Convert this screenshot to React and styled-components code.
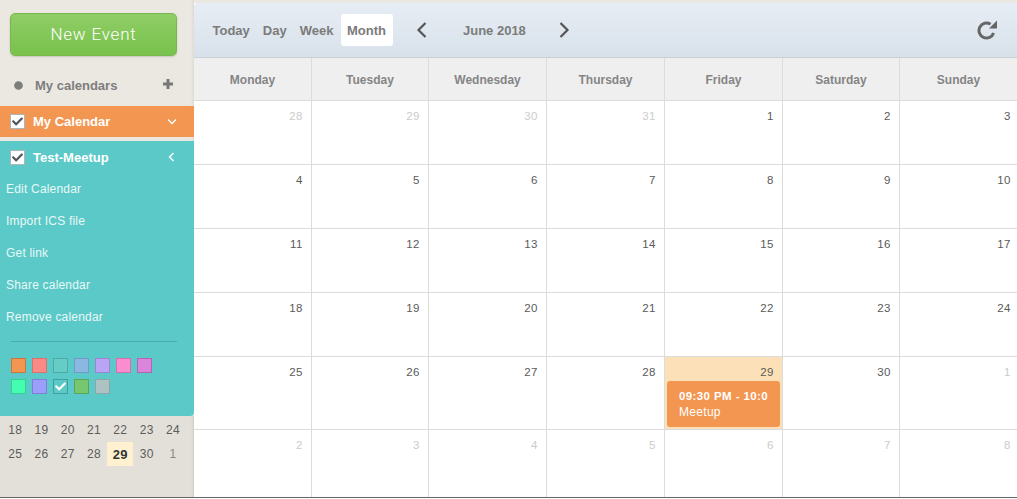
import React from 'react';
import styled, { createGlobalStyle } from 'styled-components';
import { FaCheck, FaCircle } from 'react-icons/fa';

const GlobalStyle = createGlobalStyle`
html, body { margin:0; padding:0; background:#fff; overflow:hidden; }
body { font-family:"Liberation Sans", Arial, sans-serif; }
* { box-sizing:border-box; }
`

const Page = styled.div`
width:1017px;
height:498px;
display:flex;
overflow:hidden;
border-bottom:1px solid #666;
`

const Sidebar = styled.aside`
width:194px;
flex:none;
display:flex;
flex-direction:column;
background:#ebe8e1;
box-shadow:inset -3px 0 3px -2px rgba(0,0,0,0.08);
`

const NewEvent = styled.button`
display:block;
width:167px;
height:43px;
margin:13px 0 0 10px;
padding:0 0 2px;
border:1px solid #78b84e;
border-radius:5px;
background:linear-gradient(#90cd66,#78c24c);
box-shadow:0 1px 2px rgba(0,0,0,0.15);
color:#fff;
font-family:Roboto, sans-serif;
font-weight:300;
font-size:17px;
letter-spacing:0.8px;
text-align:center;
`

const CalendarsHead = styled.div`
height:50px;
display:flex;
align-items:center;
padding:8px 21px 0 14px;
color:#7d7d7d;
font-size:13px;
font-weight:bold;
svg { flex:none; }
span { flex:1; margin-left:12px; }
`

const PlusIcon = styled.svg`
width:10px;
height:10px;
margin-bottom:2px;
fill:#777;
`

const CalendarRow = styled.div`
height:${p => p.$h}px;
display:flex;
align-items:center;
padding:0 ${p => p.$right}px 0 10px;
background:${p => p.$bg};
color:#fff;
font-size:13px;
font-weight:bold;
span { flex:1; margin-left:8px; }
`

const CheckBox = styled.div`
width:15px;
height:15px;
flex:none;
display:flex;
align-items:center;
justify-content:center;
background:#fff;
border:1px solid #aeb6bb;
color:#4f5660;
font-size:11px;
`

const TealPanel = styled.div`
margin-top:4px;
background:#5bc9c7;
border-bottom-right-radius:4px;
height:275px;
display:flex;
flex-direction:column;
`

const MenuList = styled.div`
display:flex;
flex-direction:column;
`

const MenuItem = styled.div`
height:32px;
line-height:32px;
padding-left:6px;
color:#e9f8f8;
font-size:12px;
letter-spacing:0.2px;
`

const Divider = styled.div`
height:1px;
margin:8px 17px 0 11px;
background:#48acab;
`

const Swatches = styled.div`
display:grid;
grid-template-columns:repeat(7,15px);
grid-auto-rows:15px;
column-gap:6px;
row-gap:6px;
margin:16px 0 0 11px;
`

const Swatch = styled.div`
display:flex;
align-items:center;
justify-content:center;
background:${p => p.$bg};
border:1px solid ${p => p.$line};
color:#fff;
font-size:11px;
`

const MiniCal = styled.div`
flex:1;
background:#e3e0da;
display:grid;
grid-template-columns:repeat(7,26.3px);
grid-auto-rows:24px;
align-content:start;
padding:2px 0 0 2px;
box-shadow:inset -3px 0 3px -2px rgba(0,0,0,0.1);
`

const MiniDay = styled.div`
display:flex;
align-items:center;
justify-content:center;
font-size:12px;
letter-spacing:0.3px;
color:${p => p.$muted ? '#8b8b87' : '#5c5c5a'};
${p => p.$today && 'background:#fff1cf;color:#333;font-weight:bold;font-size:13px;'}
`

const Main = styled.main`
flex:1;
min-width:0;
display:flex;
flex-direction:column;
padding-top:3px;
background:linear-gradient(#ebe8e1 3px,#fff 3px);
`

const Toolbar = styled.header`
height:55px;
flex:none;
display:flex;
align-items:center;
padding:0 20px 0 12px;
background:linear-gradient(#e7edf5,#d8e1ea);
border-bottom:1px solid #c9d0d6;
border-top-left-radius:4px;
color:#7b7b7b;
font-size:13px;
font-weight:bold;
`

const ViewTab = styled.div`
height:32px;
padding:${p => p.$active ? '0 7px 0 6px' : '0 6.5px'};
margin-left:${p => p.$active ? '1px' : '0'};
display:flex;
align-items:center;
border-radius:3px;
background:${p => p.$active ? '#fff' : 'transparent'};
`

const Month = styled.div`
width:130px;
padding-left:3px;
text-align:center;
font-size:13px;
`

const NavArrow = styled.svg`
width:12px;
height:16px;
flex:none;
fill:none;
stroke:#555;
stroke-width:2.2;
margin:${p => p.$margin || 0};
`

const Refresh = styled.svg`
width:20px;
height:20px;
margin-left:auto;
fill:none;
stroke:#666;
stroke-width:3;
polygon { fill:#666; stroke:none; }
`

const columns = '118px 117px 118px 118px 118px 117px 117px';

const WeekHead = styled.div`
height:43px;
flex:none;
display:grid;
grid-template-columns:${columns};
background:#efefef;
border-bottom:1px solid #dcdcdc;
`

const WeekCell = styled.div`
display:flex;
align-items:center;
justify-content:center;
padding-top:2px;
color:#858585;
font-size:12px;
font-weight:bold;
border-right:1px solid #dcdcdc;
&:last-child { border-right:none; }
`

const Grid = styled.div`
flex:1;
display:grid;
grid-template-columns:${columns};
grid-template-rows:64px 64px 64px 64px 73px 1fr;
`

const DayCell = styled.div`
border-right:1px solid #dcdcdc;
border-bottom:1px solid #dcdcdc;
background:${p => p.$hl ? '#fce1b8' : '#fff'};
padding:9px 8px 0 2px;
text-align:right;
font-size:11.5px;
letter-spacing:0.5px;
color:${p => p.$muted ? '#cbcbcb' : '#5a5a5a'};
&:nth-child(7n) { border-right:none; padding-right:6px; }
&:nth-last-child(-n+7) { border-bottom:none; }
`

const EventCard = styled.div`
margin:3px -6px 0 0;
height:46px;
padding:7px 0 0 12px;
background:#f39651;
border-radius:3px;
color:#fff;
text-align:left;
font-size:12px;
line-height:16px;
overflow:hidden;
white-space:nowrap;
letter-spacing:0.3px;
b { display:block; width:89px; overflow:hidden; letter-spacing:0.4px; font-size:11.5px; }
`

const swatches = [
  ['#f39651', '#c9773c'], ['#fb8a84', '#d9726d'], ['#66cdc6', '#4fa8a3'], ['#8bb8e0', '#6f9cc0'],
  ['#baa4f4', '#9a85d0'], ['#f98dd0', '#d470ad'], ['#d985d9', '#b365b3'], ['#44fdb0', '#35d090'],
  ['#9c9efc', '#7e80d8'], ['#5bc9c7', '#3f9f9d', true], ['#76c770', '#5aa655'], ['#abc3c3', '#8ea5a5'],
];

const weekDays = ['Monday', 'Tuesday', 'Wednesday', 'Thursday', 'Friday', 'Saturday', 'Sunday'];

const cells = [
  [28, 1], [29, 1], [30, 1], [31, 1], [1], [2], [3],
  [4], [5], [6], [7], [8], [9], [10],
  [11], [12], [13], [14], [15], [16], [17],
  [18], [19], [20], [21], [22], [23], [24],
  [25], [26], [27], [28], [29], [30], [1, 1],
  [2, 1], [3, 1], [4, 1], [5, 1], [6, 1], [7, 1], [8, 1],
];

const miniDays = [18, 19, 20, 21, 22, 23, 24, 25, 26, 27, 28, 29, 30, 1];

export default function App() {
  return (
    <Page>
      <GlobalStyle />
      <Sidebar>
        <NewEvent>New Event</NewEvent>
        <CalendarsHead>
          <FaCircle size={9} />
          <span>My calendars</span>
          <PlusIcon viewBox="0 0 10 10"><path d="M3.5 0h3v3.5H10v3H6.5V10h-3V6.5H0v-3h3.5z" /></PlusIcon>
        </CalendarsHead>
        <CalendarRow $bg="#f39651" $h={31} $right={17}>
          <CheckBox><FaCheck /></CheckBox>
          <span>My Calendar</span>
          <svg width="10" height="7" viewBox="0 0 10 7" fill="none" stroke="#fff" strokeWidth="1.4"><path d="M1 1.5 5 5.5 9 1.5" /></svg>
        </CalendarRow>
        <TealPanel>
          <CalendarRow $bg="transparent" $h={32} $right={19}>
            <CheckBox><FaCheck /></CheckBox>
            <span>Test-Meetup</span>
            <svg width="7" height="10" viewBox="0 0 7 10" fill="none" stroke="#fff" strokeWidth="1.4"><path d="M5.5 1 1.5 5 5.5 9" /></svg>
          </CalendarRow>
          <MenuList>
            <MenuItem>Edit Calendar</MenuItem>
            <MenuItem>Import ICS file</MenuItem>
            <MenuItem>Get link</MenuItem>
            <MenuItem>Share calendar</MenuItem>
            <MenuItem>Remove calendar</MenuItem>
          </MenuList>
          <Divider />
          <Swatches>
            {swatches.map(([bg, line, on], i) => (
              <Swatch key={i} $bg={bg} $line={line}>{on && <FaCheck />}</Swatch>
            ))}
          </Swatches>
        </TealPanel>
        <MiniCal>
          {miniDays.map((d, i) => (
            <MiniDay key={i} $today={d === 29} $muted={i === 13}>{d}</MiniDay>
          ))}
        </MiniCal>
      </Sidebar>
      <Main>
        <Toolbar>
          <ViewTab>Today</ViewTab>
          <ViewTab>Day</ViewTab>
          <ViewTab>Week</ViewTab>
          <ViewTab $active>Month</ViewTab>
          <NavArrow $margin="0 0 0 23px" viewBox="0 0 12 16"><path d="M9.5 1 2.5 8l7 7" /></NavArrow>
          <Month>June 2018</Month>
          <NavArrow viewBox="0 0 12 16"><path d="M2.5 1l7 7-7 7" /></NavArrow>
          <Refresh viewBox="0 0 20 20">
            <path d="M16.6 13A7.5 7.5 0 1 1 13.5 4.2" />
            <polygon points="20,0.5 20,8.5 12,8.5" />
          </Refresh>
        </Toolbar>
        <WeekHead>
          {weekDays.map(d => <WeekCell key={d}>{d}</WeekCell>)}
        </WeekHead>
        <Grid>
          {cells.map(([d, muted], i) => (
            <DayCell key={i} $muted={muted} $hl={i === 32}>
              {d}
              {i === 32 && (
                <EventCard>
                  <b>09:30 PM - 10:00 PM</b>
                  Meetup
                </EventCard>
              )}
            </DayCell>
          ))}
        </Grid>
      </Main>
    </Page>
  );
}
